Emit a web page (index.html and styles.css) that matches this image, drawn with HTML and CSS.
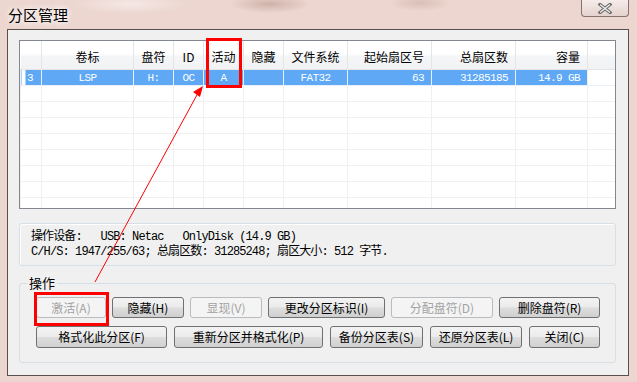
FILE: index.html
```html
<!DOCTYPE html>
<html>
<head>
    <title>分区管理</title>
<link rel="stylesheet" href="styles.css">
</head>
<body>
    <div class="window">
        <div class="titlebar">
            <div class="title">分区管理</div>
            <div class="close">
                <svg width="14" height="11" viewBox="0 0 14 11">
                    <path d="M2 1.5 L12 9.5 M12 1.5 L2 9.5" stroke="#6b6b6b" stroke-width="3.4" stroke-linecap="square"/>
                    <path d="M2 1.5 L12 9.5 M12 1.5 L2 9.5" stroke="#f4f4f4" stroke-width="1.2"/>
                </svg>
            </div>
        </div>

        <div class="client">
            <div class="list">
                <table>
                    <colgroup>
                        <col class="c-num"><col class="c-label"><col class="c-drive"><col class="c-id">
                        <col class="c-act"><col class="c-hid"><col class="c-fs"><col class="c-start">
                        <col class="c-total"><col class="c-size"><col>
                    </colgroup>
                    <thead>
                        <tr>
                            <th></th>
                            <th>卷标</th>
                            <th>盘符</th>
                            <th>ID</th>
                            <th>活动</th>
                            <th>隐藏</th>
                            <th>文件系统</th>
                            <th class="right">起始扇区号</th>
                            <th class="right">总扇区数</th>
                            <th class="right">容量</th>
                            <th></th>
                        </tr>
                    </thead>
                    <tbody>
                        <tr class="selected">
                            <td class="num">3</td>
                            <td>LSP</td>
                            <td>H:</td>
                            <td>OC</td>
                            <td>A</td>
                            <td></td>
                            <td>FAT32</td>
                            <td class="right">63</td>
                            <td class="right">31285185</td>
                            <td class="right">14.9 GB</td>
                            <td class="blank"></td>
                        </tr>
                        <tr><td></td><td></td><td></td><td></td><td></td><td></td><td></td><td></td><td></td><td></td><td></td></tr>
                        <tr><td></td><td></td><td></td><td></td><td></td><td></td><td></td><td></td><td></td><td></td><td></td></tr>
                        <tr><td></td><td></td><td></td><td></td><td></td><td></td><td></td><td></td><td></td><td></td><td></td></tr>
                        <tr><td></td><td></td><td></td><td></td><td></td><td></td><td></td><td></td><td></td><td></td><td></td></tr>
                        <tr><td></td><td></td><td></td><td></td><td></td><td></td><td></td><td></td><td></td><td></td><td></td></tr>
                        <tr><td></td><td></td><td></td><td></td><td></td><td></td><td></td><td></td><td></td><td></td><td></td></tr>
                        <tr><td></td><td></td><td></td><td></td><td></td><td></td><td></td><td></td><td></td><td></td><td></td></tr>
                        <tr><td></td><td></td><td></td><td></td><td></td><td></td><td></td><td></td><td></td><td></td><td></td></tr>
                    </tbody>
                </table>
            </div>

            <div class="info">
                <div class="line">操作设备:   USB: Netac   OnlyDisk (14.9 GB)</div>
                <div class="line">C/H/S: 1947/255/63; 总扇区数: 31285248; 扇区大小: 512 字节.</div>
            </div>

            <fieldset class="ops">
                <legend>操作</legend>
                <div class="buttons">
                    <div class="row row-1">
                        <button class="b-act" disabled>激活(A)</button>
                        <button class="b-hide">隐藏(H)</button>
                        <button class="b-show" disabled>显现(V)</button>
                        <button class="b-id">更改分区标识(I)</button>
                        <button class="b-letter" disabled>分配盘符(D)</button>
                        <button class="b-del">删除盘符(R)</button>
                    </div>
                    <div class="row row-2">
                        <button class="b-fmt">格式化此分区(F)</button>
                        <button class="b-repart">重新分区并格式化(P)</button>
                        <button class="b-backup">备份分区表(S)</button>
                        <button class="b-restore">还原分区表(L)</button>
                        <button class="b-close">关闭(C)</button>
                    </div>
                </div>
            </fieldset>
        </div>
    </div>

    <!-- annotation marks drawn over the dialog -->
    <svg class="marks" width="637" height="382" viewBox="0 0 637 382">
        <rect x="207.5" y="39.5" width="33" height="47" fill="none" stroke="#f00" stroke-width="3"/>
        <rect x="35.5" y="293.5" width="72" height="31" fill="none" stroke="#f00" stroke-width="3"/>
        <line x1="95" y1="282" x2="198" y2="93" stroke="#f00" stroke-width="1"/>
        <polygon points="203,86 193,92 200,97" fill="#f00"/>
    </svg>
</body>
</html>
```

FILE: styles.css
```css
body {
    margin: 0;
    width: 637px;
    height: 382px;
    overflow: hidden;
    position: relative;
    font-family: "Noto Sans CJK SC", sans-serif;
    background: #ecd6cf;
    background-image:
        radial-gradient(ellipse 60px 10px at 130px 4px, rgba(255,255,255,0.45), transparent),
        radial-gradient(ellipse 40px 9px at 270px 4px, rgba(150,110,100,0.35), transparent),
        radial-gradient(ellipse 30px 8px at 420px 3px, rgba(160,120,110,0.25), transparent);
}

.window {
    display: flex;
    flex-direction: column;
    height: 382px;
}

.titlebar {
    display: flex;
    justify-content: space-between;
    align-items: flex-start;
    height: 29px;
}

.title {
    margin: 5px 0 0 8px;
    font-size: 15px;
    line-height: 20px;
    color: #000;
    text-shadow: 0 0 5px #fff, 0 0 8px #fff;
}

.close {
    width: 48px;
    height: 17px;
    margin-right: 8px;
    box-sizing: border-box;
    border: 1px solid #85716d;
    border-top: none;
    border-radius: 0 0 4px 4px;
    background: linear-gradient(#f6ecea, #e4d2ce);
    display: flex;
    align-items: center;
    justify-content: center;
}

.client {
    margin-left: 7px;
    width: 622px;
    height: 347px;
    box-sizing: border-box;
    border: 1px solid #59504e;
    background: #f0f0f0;
    padding: 10px 12px 0 11px;
}

/* list view */
.list {
    height: 169px;
    box-sizing: border-box;
    border: 1px solid #828790;
    background: #fff;
    overflow: hidden;
}

table {
    width: 596px;
    border-collapse: collapse;
    table-layout: fixed;
}

.c-num { width: 21px; }
.c-label { width: 92px; }
.c-drive { width: 40px; }
.c-id { width: 30px; }
.c-act { width: 40px; }
.c-hid { width: 40px; }
.c-fs { width: 64px; }
.c-start { width: 84px; }
.c-total { width: 84px; }
.c-size { width: 72px; }

th {
    height: 24px;
    padding: 4px 7px 0;
    font-weight: normal;
    font-size: 12px;
    color: #000;
    text-align: center;
    white-space: nowrap;
    background: linear-gradient(#ffffff 0%, #ffffff 45%, #f4f5f7 55%, #f1f2f4 100%);
    border-right: 1px solid #e4e5e7;
    border-bottom: 1px solid #e4e5e7;
    line-height: 14px;
}

td {
    height: 15px;
    padding: 0 7px;
    border: 1px solid #f0f0f0;
    font-family: "Liberation Mono", "Noto Sans CJK SC", monospace;
    font-size: 11px;
    letter-spacing: -0.6px;
    line-height: 14px;
    text-align: center;
    white-space: nowrap;
    color: #fff;
}

.right {
    text-align: right;
}

.selected td {
    background: #5ea8f6;
    border-color: #e8f1fb;
}

.selected td.num {
    text-align: left;
    padding-left: 6px;
    background: linear-gradient(90deg, #fff 4px, #5ea8f6 4px);
}

.selected td.blank {
    background: #fff;
}

/* device info */
.info {
    margin-top: 14px;
    height: 43px;
    box-sizing: border-box;
    border: 1px solid #d5dfe5;
    border-radius: 3px;
    box-shadow: inset 1px 1px 0 #fff;
    padding: 6px 10px 0 11px;
    font-family: "Liberation Mono", "Noto Sans CJK SC", monospace;
    font-size: 12px;
    letter-spacing: -0.9px;
    line-height: 15px;
    color: #000;
}

.info .line {
    white-space: pre;
}

/* operations group */
.ops {
    margin: 10px 0 0 0;
    height: 87px;
    box-sizing: border-box;
    border: 1px solid #d5dfe5;
    border-radius: 3px;
    padding: 0 0 0 7px;
}

.ops legend {
    padding: 0 2px;
    font-size: 13px;
    line-height: 14px;
    color: #000;
}

.buttons {
    margin: 7px 0 0 9px;
}

.row {
    display: flex;
}

.row-1 {
    gap: 6px;
}

.row-1 button {
    height: 21px;
}

.row-2 {
    gap: 7px;
    margin-top: 8px;
}

.row-2 button {
    height: 22px;
}

button {
    box-sizing: border-box;
    padding: 0;
    font-family: "Noto Sans CJK SC", sans-serif;
    font-size: 12px;
    line-height: 14px;
    color: #000;
    border: 1px solid #707070;
    border-radius: 3px;
    background: linear-gradient(#f3f3f3 0%, #ebebeb 48%, #dddddd 52%, #d0d0d0 100%);
}

button:disabled {
    color: #a3a3a3;
    border-color: #b9bcbf;
    background: #f4f4f4;
}

.b-act { width: 70px; }
.b-hide { width: 72px; }
.b-show { width: 72px; }
.b-id { width: 117px; }
.b-letter { width: 102px; }
.b-del { width: 101px; }

.b-fmt { width: 131px; }
.b-repart { width: 149px; }
.b-backup { width: 93px; }
.b-restore { width: 92px; }
.b-close { width: 71px; }

.marks {
    position: absolute;
    left: 0;
    top: 0;
    pointer-events: none;
}
```
